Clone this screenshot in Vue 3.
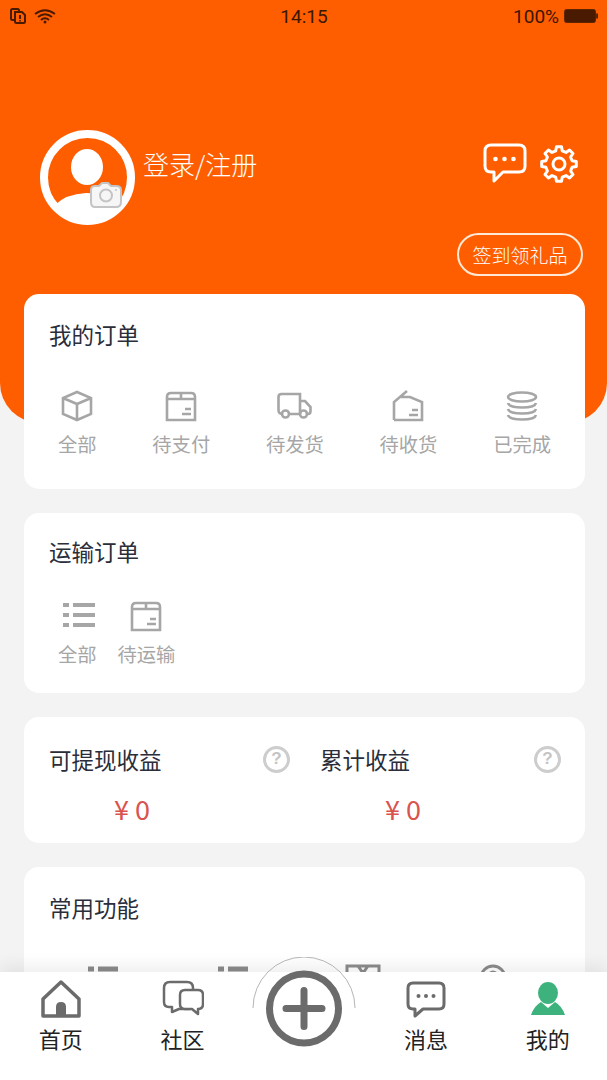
<script setup>
// order shortcuts in the two top cards
const orderItems = [
  { icon: '#i-cube', label: '全部' },
  { icon: '#i-box', label: '待支付' },
  { icon: '#i-truck', label: '待发货' },
  { icon: '#i-open', label: '待收货' },
  { icon: '#i-coins', label: '已完成' }
]
const transportItems = [
  { icon: '#i-list', label: '全部' },
  { icon: '#i-box', label: '待运输' }
]
const incomes = ['可提现收益', '累计收益']

// cog outline, 8 teeth
function gearPath(cx, cy, outer, inner) {
  const pts = []
  const n = 8
  for (let i = 0; i < n; i++) {
    const a = (i / n) * Math.PI * 2 - Math.PI / 2
    const w = Math.PI / n
    const add = (r, t) => pts.push(`${(cx + r * Math.cos(t)).toFixed(1)} ${(cy + r * Math.sin(t)).toFixed(1)}`)
    add(inner, a - w * 0.62)
    add(outer, a - w * 0.36)
    add(outer, a + w * 0.36)
    add(inner, a + w * 0.62)
  }
  return 'M' + pts.join('L') + 'Z'
}
const gear = gearPath(19, 19, 17.5, 13.5)
</script>

<template>
  <div class="page">
    <svg class="defs" width="0" height="0">
      <symbol id="i-cube" viewBox="0 0 36 32">
        <path d="M18 2L32 8V24L18 30L4 24V8ZM4 8L18 14L32 8M18 14V30" />
      </symbol>
      <symbol id="i-box" viewBox="0 0 36 32">
        <path d="M4 30V7Q4 3 8 3H28Q32 3 32 7V30ZM4 9H32M18 3V9M22 19H28M19 24H28" />
      </symbol>
      <symbol id="i-truck" viewBox="0 0 36 32">
        <path d="M5 24Q1.500 24 1.500 20V7Q1.500 4 4.500 4H23V24M12 24H22M23 11H28L33.500 17V21Q33.500 24 31 24" />
        <circle cx="8.500" cy="24" r="3.500" />
        <circle cx="26.500" cy="24" r="3.500" />
      </symbol>
      <symbol id="i-open" viewBox="0 0 36 32">
        <path d="M4 30V12L17 1M11 7H20L32 12V30H4M22 20H28M19 25H28" />
      </symbol>
      <symbol id="i-coins" viewBox="0 0 36 32">
        <ellipse cx="18" cy="7" rx="14" ry="4.500" />
        <path d="M4 13Q5 17.500 18 17.500T32 13M4 19Q5 23.500 18 23.500T32 19M4 25Q5 29.500 18 29.500T32 25" />
      </symbol>
      <symbol id="i-list" viewBox="0 0 36 32">
        <path stroke-width="4" d="M4 5H10M14 5H36M4 15H10M14 15H36M4 25H10M14 25H36" />
      </symbol>
    </svg>

    <div class="scroll">
      <header class="hero">
        <div class="status">
          <div class="status-left">
            <svg width="16" height="16" viewBox="0 0 16 16" class="dark-icon">
              <path d="M4 12H2.500Q1 12 1 10.500V2.500Q1 1 2.500 1H7.500Q9 1 9 2.500V4" />
              <path d="M5 4H12L15 7V13.500Q15 15 13.500 15H6.500Q5 15 5 13.500Z" />
              <path d="M10 7V11M10 12.200V13.500" />
            </svg>
            <svg width="22" height="15" viewBox="0 0 22 15" class="dark-icon">
              <path d="M1 5Q11 -2.500 21 5M4 8Q11 2.500 18 8M7 11Q11 7.500 15 11" />
              <circle class="dot" cx="11" cy="13" r="1.500" />
            </svg>
          </div>
          <span class="clock">14:15</span>
          <div class="status-right">
            <span class="percent">100%</span>
            <svg width="34" height="14" viewBox="0 0 34 14">
              <rect x="0.500" y="0.500" width="31" height="13" rx="2" fill="#4a1a00" stroke="#5c2500" />
              <rect x="32" y="4.500" width="2" height="5" fill="#5c2500" />
            </svg>
          </div>
        </div>

        <div class="profile">
          <svg class="avatar" width="95" height="95" viewBox="0 0 95 95">
            <circle cx="47.500" cy="47.500" r="43.500" fill="none" stroke="#fff" stroke-width="8" />
            <ellipse cx="47" cy="37" rx="16" ry="18" fill="#fff" />
            <path d="M15 75Q26 64 46 63Q70 63 80 75A43 43 0 0 1 15 75Z" fill="#fff" />
            <path d="M55 77H76Q81 77 81 72V60Q81 56 76 56H71L68 53H62L59 56H55Q51 56 51 60V72Q51 77 55 77Z" fill="#f6f6f6" stroke="#c4c4c4" stroke-width="2" />
            <circle cx="66" cy="65.500" r="6" fill="none" stroke="#c4c4c4" stroke-width="2" />
            <circle cx="76" cy="60" r="1" fill="#c4c4c4" />
          </svg>
          <span class="login">登录/注册</span>
          <div class="hero-actions">
            <svg width="44" height="41" viewBox="0 0 44 41" class="white-icon">
              <path d="M8 2H36Q42 2 42 8V23Q42 29 36 29H20L11 38V29H8Q2 29 2 23V8Q2 2 8 2Z" />
              <circle class="dot" cx="12.500" cy="16" r="2.300" />
              <circle class="dot" cx="21.500" cy="16" r="2.300" />
              <circle class="dot" cx="30.500" cy="16" r="2.300" />
            </svg>
            <svg width="38" height="38" viewBox="0 0 38 38" class="white-icon">
              <path :d="gear" />
              <circle cx="19" cy="19" r="6" />
            </svg>
          </div>
        </div>

        <button class="gift">签到领礼品</button>
      </header>

      <main class="cards">
        <section class="card card-orders">
          <h2 class="title">我的订单</h2>
          <div class="order-row">
            <div v-for="item in orderItems" :key="item.label" class="order-item">
              <svg class="line-icon" width="36" height="32"><use :href="item.icon" /></svg>
              <span>{{ item.label }}</span>
            </div>
          </div>
        </section>

        <section class="card card-transport">
          <h2 class="title">运输订单</h2>
          <div class="order-row order-row-left">
            <div v-for="item in transportItems" :key="item.label" class="order-item">
              <svg class="line-icon" width="36" height="32"><use :href="item.icon" /></svg>
              <span>{{ item.label }}</span>
            </div>
          </div>
        </section>

        <section class="card card-income">
          <div v-for="name in incomes" :key="name" class="income">
            <div class="income-head">
              <h2 class="title">{{ name }}</h2>
              <span class="help">?</span>
            </div>
            <div class="amount">¥ 0</div>
          </div>
        </section>

        <section class="card card-tools">
          <h2 class="title">常用功能</h2>
          <div class="tools">
            <svg width="36" height="32" viewBox="0 0 36 32" class="tool-icon">
              <path class="thick" d="M3 5H9M13 5H33M3 14H9M13 14H33M3 23H9M13 23H33" />
            </svg>
            <svg width="36" height="32" viewBox="0 0 36 32" class="tool-icon">
              <path class="thick" d="M3 5H9M13 5H33M3 14H9M13 14H33M3 23H9M13 23H33" />
            </svg>
            <svg width="36" height="32" viewBox="0 0 36 32" class="tool-icon">
              <path d="M2 2H34V30H2ZM13 2L18 9L23 2M18 9V16" />
            </svg>
            <svg width="36" height="32" viewBox="0 0 36 32" class="tool-icon">
              <circle cx="18" cy="14" r="12" />
              <circle cx="18" cy="12" r="4" />
            </svg>
          </div>
        </section>
      </main>
    </div>

    <nav class="tabbar">
      <div class="tab">
        <svg width="42" height="38" viewBox="0 0 42 38" class="tab-icon">
          <path d="M3 36V19L21 2L39 19V36Z" />
          <path class="fill" d="M16 36V27Q16 22 21 22Q26 22 26 27V36Z" />
        </svg>
        <span>首页</span>
      </div>
      <div class="tab">
        <svg width="42" height="38" viewBox="0 0 42 38" class="tab-icon thin">
          <path d="M8 2H25Q31 2 31 8V25Q31 29 27 29H17L10 32V27H7Q2 27 2 22V8Q2 2 8 2Z" />
          <path class="cover" d="M23 10H36Q41 10 41 15V24Q41 29 36 29V34L30 29H23Q18 29 18 24V15Q18 10 23 10Z" />
        </svg>
        <span>社区</span>
      </div>
      <div class="tab tab-add">
        <svg width="110" height="96" viewBox="0 0 110 96">
          <path d="M4 51A51 51 0 0 1 106 51" fill="none" stroke="#b5b5b5" stroke-width="1" />
          <circle cx="55" cy="51.500" r="34.500" fill="#fff" stroke="#6b6b6b" stroke-width="7" />
          <path d="M37 51.500H73M55 33.500V69.500" stroke="#6b6b6b" stroke-width="7" stroke-linecap="round" />
        </svg>
      </div>
      <div class="tab">
        <svg width="42" height="38" viewBox="0 0 42 38" class="tab-icon message">
          <path d="M8 3H34Q39 3 39 8V24Q39 29 34 29H18L10 36V29H8Q3 29 3 24V8Q3 3 8 3Z" />
          <circle class="dot-gray" cx="13.500" cy="16" r="2" />
          <circle class="dot-gray" cx="21" cy="16" r="2" />
          <circle class="dot-gray" cx="28.500" cy="16" r="2" />
        </svg>
        <span>消息</span>
      </div>
      <div class="tab">
        <svg width="42" height="38" viewBox="0 0 42 38">
          <ellipse cx="21" cy="13" rx="10" ry="11" fill="#3eb27d" />
          <path d="M4 35Q7 26 14 22L21 28L28 22Q35 26 38 35Z" fill="#3eb27d" />
        </svg>
        <span>我的</span>
      </div>
    </nav>
  </div>
</template>

<style scoped>
.page {
  display: flex;
  flex-direction: column;
  width: 607px;
  height: 1080px;
  overflow: hidden;
  background: #f3f3f3;
  font-family: "Noto Sans CJK SC", "Noto Sans", sans-serif;
}

.defs {
  position: absolute;
}

.scroll {
  flex: 1;
  min-height: 0;
  overflow: hidden;
}

.hero {
  display: flex;
  flex-direction: column;
  height: 423px;
  background: #ff5e00;
  border-radius: 0 0 40px 40px;
}

.status {
  display: grid;
  grid-template-columns: 1fr auto 1fr;
  align-items: center;
  height: 32px;
  padding: 0 9px 0 10px;
  color: #3a1600;
  font-family: Roboto, sans-serif;
  font-size: 19px;
}

.status-left {
  display: flex;
  align-items: center;
  gap: 8px;
}

.status-right {
  display: flex;
  align-items: center;
  justify-content: flex-end;
  gap: 5px;
}

.dark-icon path {
  fill: none;
  stroke: #4a1a00;
  stroke-width: 2;
}

.dark-icon .dot {
  fill: #4a1a00;
}

.profile {
  display: flex;
  align-items: flex-start;
  margin-top: 98px;
  padding: 0 29px 0 40px;
}

.login {
  margin: 15px 0 0 8px;
  color: #fff;
  font-size: 26px;
  font-weight: 300;
  line-height: 38px;
}

.hero-actions {
  display: flex;
  align-items: center;
  gap: 13px;
  margin: 13px 0 0 auto;
}

.white-icon path,
.white-icon circle {
  fill: none;
  stroke: #fff;
  stroke-width: 3;
  stroke-linejoin: round;
}

.white-icon .dot {
  fill: #fff;
  stroke: none;
}

.gift {
  align-self: flex-end;
  width: 126px;
  height: 43px;
  margin: 8px 24px 0 0;
  padding: 0;
  border: 2px solid #ffe9d6;
  border-radius: 22px;
  background: transparent;
  color: #fff;
  font-family: inherit;
  font-size: 19px;
  font-weight: 300;
}

.cards {
  display: flex;
  flex-direction: column;
  gap: 24px;
  margin-top: -129px;
  padding: 0 22px 0 24px;
}

.card {
  box-sizing: border-box;
  background: #fff;
  border-radius: 15px;
}

.title {
  margin: 0;
  color: #2a2d3a;
  font-size: 22.500px;
  font-weight: 400;
  line-height: 30px;
}

.card-orders {
  height: 195px;
  padding: 25px 0 0;
}

.card-transport {
  height: 180px;
  padding: 23px 0 0;
}

.card-orders .title,
.card-transport .title,
.card-tools .title {
  padding-left: 25px;
}

.order-row {
  display: flex;
  justify-content: space-between;
  margin-top: 41px;
  padding: 0 34px;
}

.order-row-left {
  justify-content: flex-start;
  gap: 21px;
  margin-top: 34px;
}

.order-item {
  display: flex;
  flex-direction: column;
  align-items: center;
  color: #a6a6a6;
  font-size: 19.300px;
  line-height: 24px;
}

.order-item span {
  margin-top: 10px;
}

.line-icon {
  display: block;
  fill: none;
  stroke: #a6a6a6;
  stroke-width: 2.600;
}

.card-income {
  display: grid;
  grid-template-columns: 241px 241px;
  gap: 30px;
  height: 126px;
  padding: 27px 0 0 25px;
}

.income-head {
  display: flex;
  align-items: center;
  justify-content: space-between;
}

.help {
  display: flex;
  align-items: center;
  justify-content: center;
  width: 27px;
  height: 27px;
  box-sizing: border-box;
  border: 3px solid #cdcdcd;
  border-radius: 50%;
  color: #c4c4c4;
  font-family: "Liberation Sans", sans-serif;
  font-size: 17px;
  font-weight: 700;
}

.amount {
  margin-top: 20px;
  padding-left: 65px;
  color: #d9534f;
  font-size: 27px;
  line-height: 30px;
}

.card-tools {
  height: 200px;
  padding-top: 25px;
}

.tools {
  display: grid;
  grid-template-columns: repeat(4, 130px);
  justify-items: center;
  margin-top: 42px;
  padding-left: 14px;
}

.tool-icon {
  display: block;
}

.tool-icon path,
.tool-icon circle {
  fill: none;
  stroke: #8c8c8c;
  stroke-width: 3;
}

.tool-icon .thick {
  stroke-width: 5;
}

.tabbar {
  position: relative;
  flex: none;
  display: grid;
  grid-template-columns: repeat(5, 121.750px);
  height: 108px;
  background: #fff;
  box-shadow: 0 -6px 16px rgba(0, 0, 0, 0.07);
}

.tab {
  display: flex;
  flex-direction: column;
  align-items: center;
  padding-top: 8px;
  color: #222;
  font-size: 22px;
  line-height: 28px;
}

.tab span {
  margin-top: 6px;
}

.tab-add {
  padding-top: 0;
}

.tab-add svg {
  margin-top: -15px;
}

.tab-icon path {
  fill: none;
  stroke: #6b6b6b;
  stroke-width: 3.500;
  stroke-linejoin: round;
}

.tab-icon.thin path {
  stroke-width: 2.500;
}

.tab-icon.message path {
  stroke-width: 3;
}

.tab-icon .fill {
  fill: #6b6b6b;
  stroke: none;
}

.tab-icon .cover {
  fill: #fff;
}

.dot-gray {
  fill: #6b6b6b;
}
</style>

<style>
html,
body {
  margin: 0;
  background: #f3f3f3;
}
</style>
